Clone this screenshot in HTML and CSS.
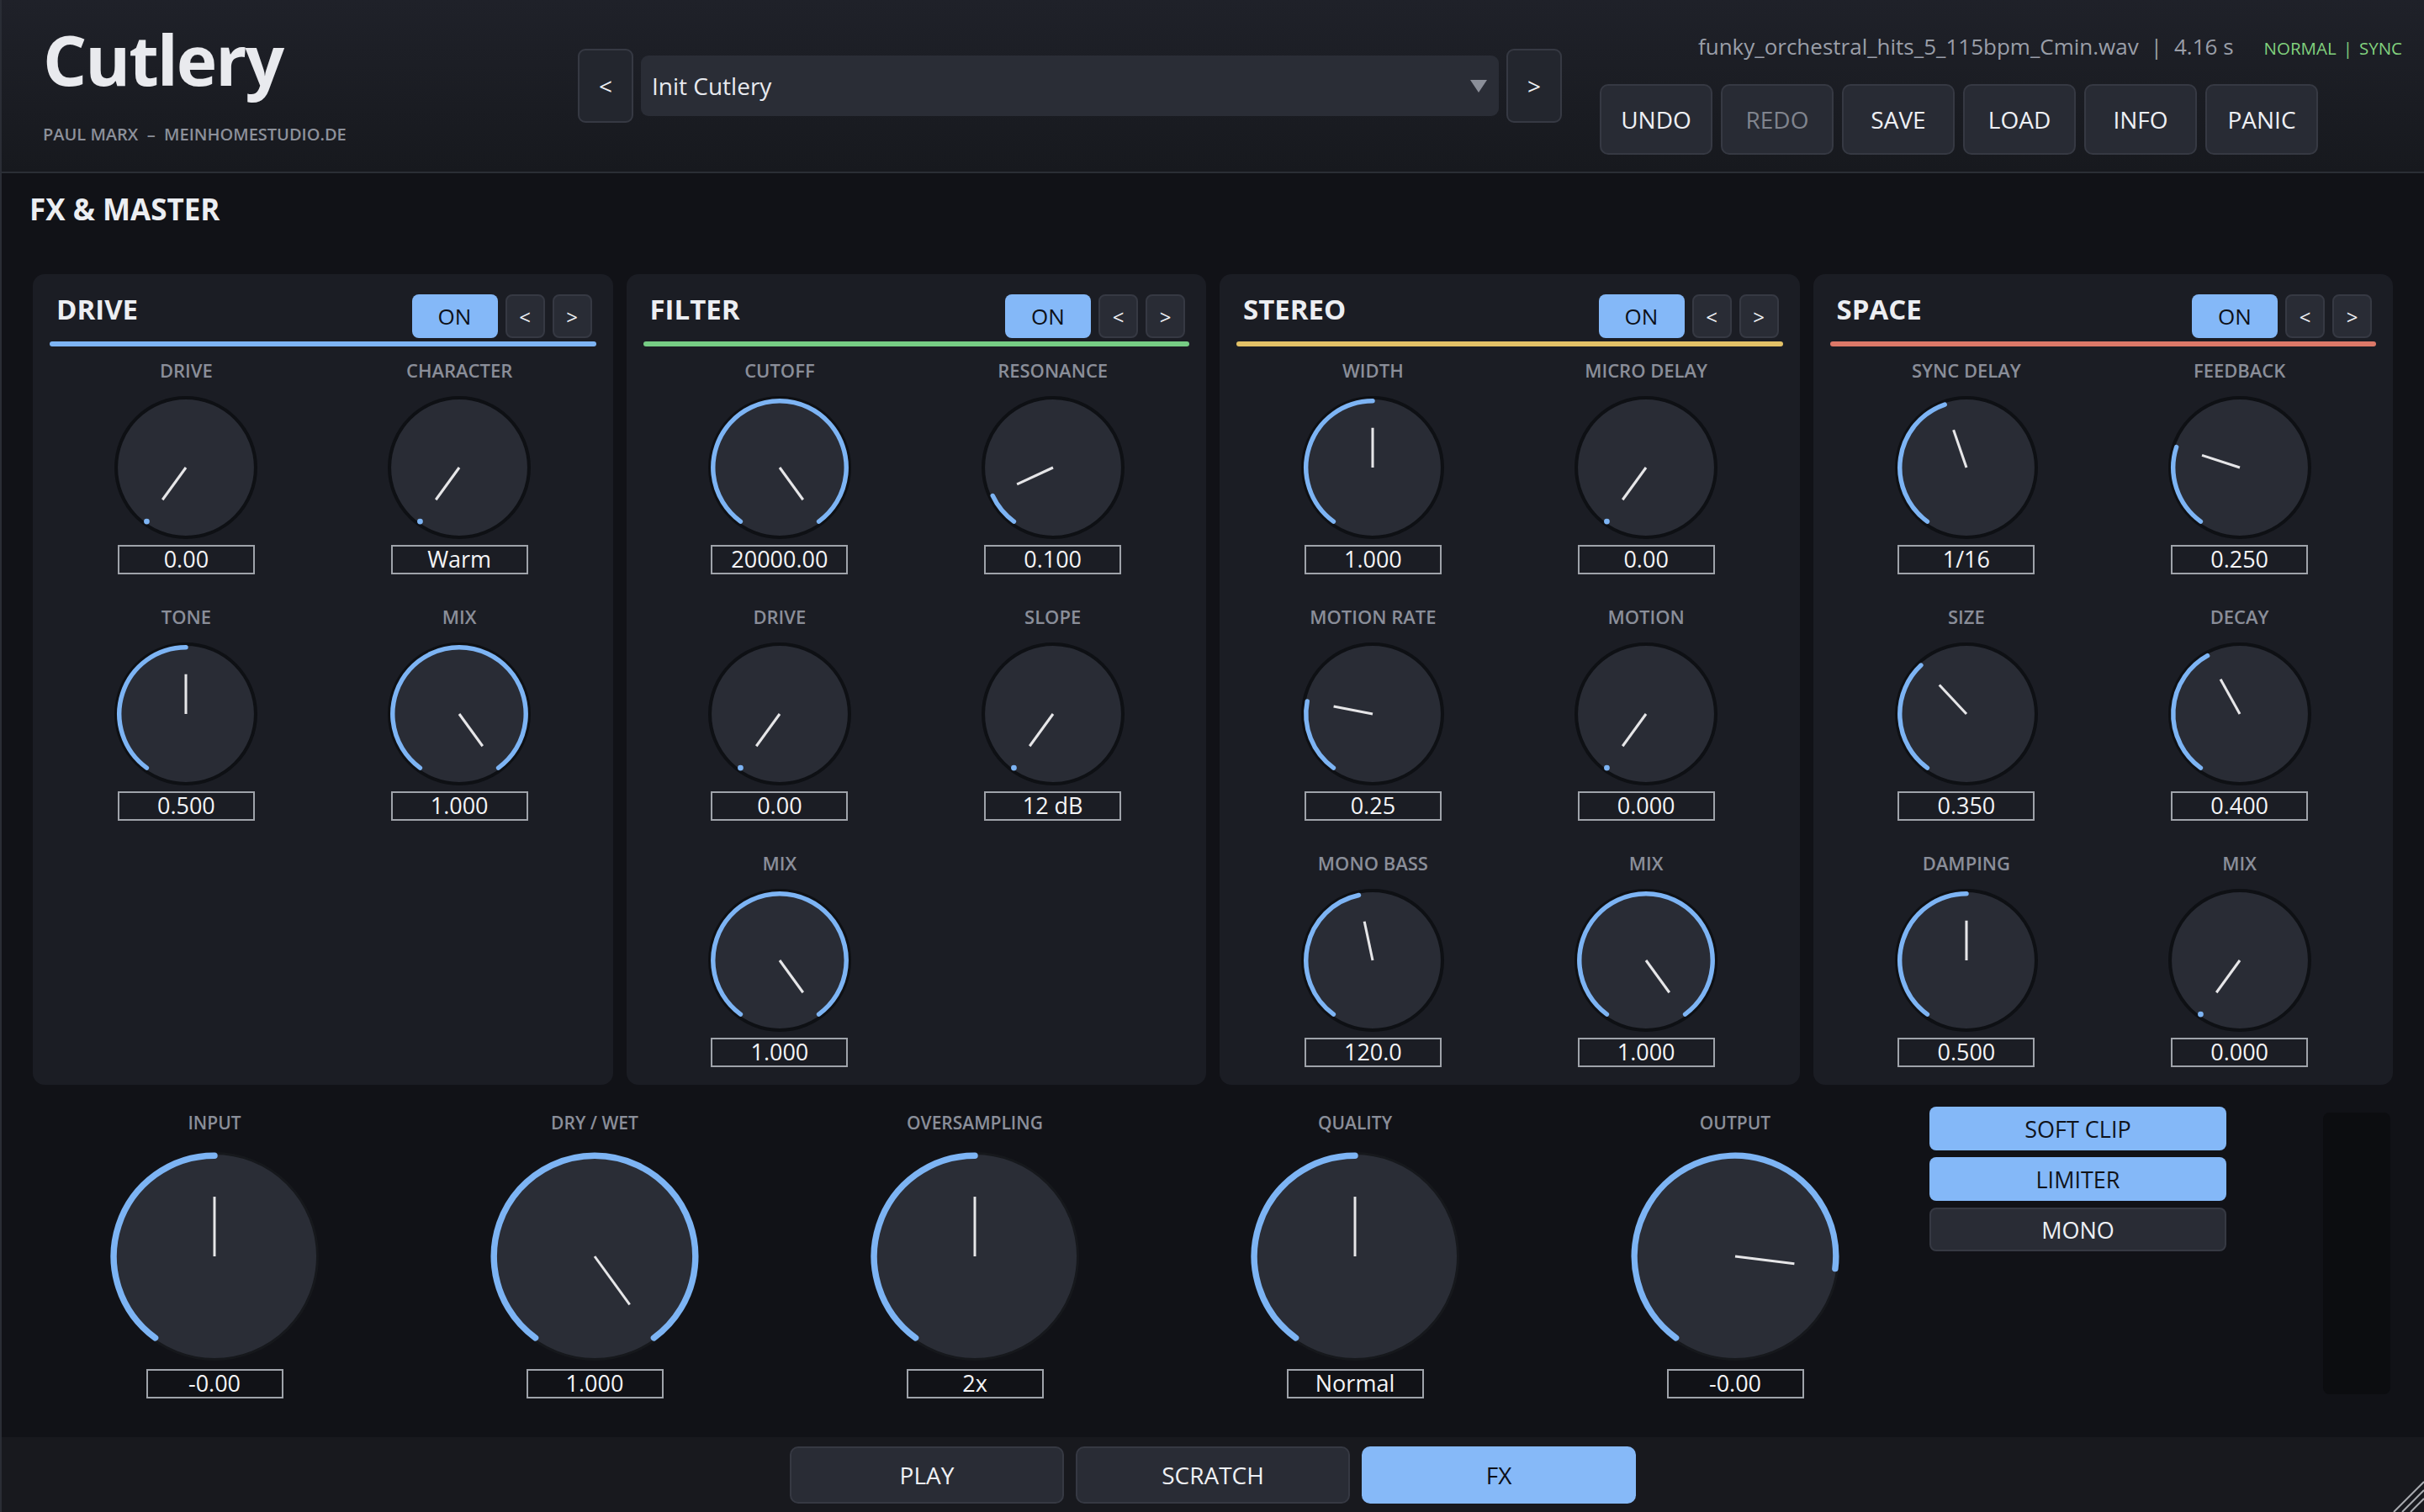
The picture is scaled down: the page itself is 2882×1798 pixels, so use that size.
FILE: index.html
```html
<!DOCTYPE html>
<html>
    <head>
        <title>Cutlery</title>
        <meta charset="UTF-8">
        <link rel="stylesheet" href="styles.css">
    </head>
    <body>
        <div class="app">

            <div class="topbar">
                <div class="brand">
                    <h1>Cutlery</h1>
                    <div class="by">PAUL MARX  –  MEINHOMESTUDIO.DE</div>
                </div>

                <div class="preset">
                    <div class="btn preset-arrow">&lt;</div>
                    <div class="preset-select">Init Cutlery<span class="caret"></span></div>
                    <div class="btn preset-arrow">&gt;</div>
                </div>

                <div class="status">
                    <div class="info">funky_orchestral_hits_5_115bpm_Cmin.wav<span class="sep">|</span>4.16 s<span class="mode">NORMAL<span class="sep2">|</span>SYNC</span></div>
                    <div class="tools">
                        <div class="btn tool">UNDO</div>
                        <div class="btn tool off">REDO</div>
                        <div class="btn tool">SAVE</div>
                        <div class="btn tool">LOAD</div>
                        <div class="btn tool">INFO</div>
                        <div class="btn tool">PANIC</div>
                    </div>
                </div>
            </div>

            <div class="main">
                <h2 class="section-title">FX &amp; MASTER</h2>

                <div class="panels">
                    <!-- drive -->
                    <div class="panel">
                        <div class="panel-head">
                            <h3>DRIVE</h3>
                            <div class="head-btns">
                                <div class="btn on">ON</div>
                                <div class="btn nav">&lt;</div>
                                <div class="btn nav">&gt;</div>
                            </div>
                        </div>
                        <div class="bar blue"></div>
                        <div class="knobs">
                            <div class="param"><div class="label">DRIVE</div><div class="knob" data-a="-144"></div><div class="value">0.00</div></div>
                            <div class="param"><div class="label">CHARACTER</div><div class="knob" data-a="-144"></div><div class="value">Warm</div></div>
                            <div class="param"><div class="label">TONE</div><div class="knob" data-a="0"></div><div class="value">0.500</div></div>
                            <div class="param"><div class="label">MIX</div><div class="knob" data-a="144"></div><div class="value">1.000</div></div>
                        </div>
                    </div>

                    <!-- filter -->
                    <div class="panel">
                        <div class="panel-head">
                            <h3>FILTER</h3>
                            <div class="head-btns">
                                <div class="btn on">ON</div>
                                <div class="btn nav">&lt;</div>
                                <div class="btn nav">&gt;</div>
                            </div>
                        </div>
                        <div class="bar green"></div>
                        <div class="knobs">
                            <div class="param"><div class="label">CUTOFF</div><div class="knob" data-a="144"></div><div class="value">20000.00</div></div>
                            <div class="param"><div class="label">RESONANCE</div><div class="knob" data-a="-115"></div><div class="value">0.100</div></div>
                            <div class="param"><div class="label">DRIVE</div><div class="knob" data-a="-144"></div><div class="value">0.00</div></div>
                            <div class="param"><div class="label">SLOPE</div><div class="knob" data-a="-144"></div><div class="value">12 dB</div></div>
                            <div class="param"><div class="label">MIX</div><div class="knob" data-a="144"></div><div class="value">1.000</div></div>
                        </div>
                    </div>

                    <!-- stereo -->
                    <div class="panel">
                        <div class="panel-head">
                            <h3>STEREO</h3>
                            <div class="head-btns">
                                <div class="btn on">ON</div>
                                <div class="btn nav">&lt;</div>
                                <div class="btn nav">&gt;</div>
                            </div>
                        </div>
                        <div class="bar yellow"></div>
                        <div class="knobs">
                            <div class="param"><div class="label">WIDTH</div><div class="knob" data-a="0"></div><div class="value">1.000</div></div>
                            <div class="param"><div class="label">MICRO DELAY</div><div class="knob" data-a="-144"></div><div class="value">0.00</div></div>
                            <div class="param"><div class="label">MOTION RATE</div><div class="knob" data-a="-79"></div><div class="value">0.25</div></div>
                            <div class="param"><div class="label">MOTION</div><div class="knob" data-a="-144"></div><div class="value">0.000</div></div>
                            <div class="param"><div class="label">MONO BASS</div><div class="knob" data-a="-12"></div><div class="value">120.0</div></div>
                            <div class="param"><div class="label">MIX</div><div class="knob" data-a="144"></div><div class="value">1.000</div></div>
                        </div>
                    </div>

                    <!-- space -->
                    <div class="panel">
                        <div class="panel-head">
                            <h3>SPACE</h3>
                            <div class="head-btns">
                                <div class="btn on">ON</div>
                                <div class="btn nav">&lt;</div>
                                <div class="btn nav">&gt;</div>
                            </div>
                        </div>
                        <div class="bar red"></div>
                        <div class="knobs">
                            <div class="param"><div class="label">SYNC DELAY</div><div class="knob" data-a="-19"></div><div class="value">1/16</div></div>
                            <div class="param"><div class="label">FEEDBACK</div><div class="knob" data-a="-72"></div><div class="value">0.250</div></div>
                            <div class="param"><div class="label">SIZE</div><div class="knob" data-a="-43"></div><div class="value">0.350</div></div>
                            <div class="param"><div class="label">DECAY</div><div class="knob" data-a="-29"></div><div class="value">0.400</div></div>
                            <div class="param"><div class="label">DAMPING</div><div class="knob" data-a="0"></div><div class="value">0.500</div></div>
                            <div class="param"><div class="label">MIX</div><div class="knob" data-a="-144"></div><div class="value">0.000</div></div>
                        </div>
                    </div>
                </div>

                <div class="master">
                    <div class="param"><div class="label">INPUT</div><div class="knob big" data-a="0"></div><div class="value">-0.00</div></div>
                    <div class="param"><div class="label">DRY / WET</div><div class="knob big" data-a="144"></div><div class="value">1.000</div></div>
                    <div class="param"><div class="label">OVERSAMPLING</div><div class="knob big" data-a="0"></div><div class="value">2x</div></div>
                    <div class="param"><div class="label">QUALITY</div><div class="knob big" data-a="0"></div><div class="value">Normal</div></div>
                    <div class="param"><div class="label">OUTPUT</div><div class="knob big" data-a="97"></div><div class="value">-0.00</div></div>
                    <div class="toggles">
                        <div class="btn toggle active">SOFT CLIP</div>
                        <div class="btn toggle active">LIMITER</div>
                        <div class="btn toggle">MONO</div>
                    </div>
                    <div class="meter"></div>
                </div>
            </div>

            <div class="footer">
                <div class="btn tab">PLAY</div>
                <div class="btn tab">SCRATCH</div>
                <div class="btn tab active">FX</div>
            </div>

            <svg class="grip" viewBox="0 0 38 38">
                <line x1="38" y1="2" x2="2" y2="38"/>
                <line x1="38" y1="12" x2="12" y2="38"/>
                <line x1="38" y1="22" x2="22" y2="38"/>
            </svg>
        </div>

        <script>
            var START = -144;

            function pt(r, deg) {
                var rad = deg * Math.PI / 180;
                return [(50 + r * Math.sin(rad)).toFixed(2), (50 - r * Math.cos(rad)).toFixed(2)];
            }

            function drawKnob(el) {
                var a = parseFloat(el.getAttribute('data-a'));
                var big = el.classList.contains('big');
                var arcR = big ? 48.3 : 46.6;
                var s = pt(arcR, START);
                var e = pt(arcR, a);
                var p = pt(big ? 28.6 : 27.8, a);

                var svg = '<svg viewBox="0 0 100 100">';
                svg += '<circle class="body" cx="50" cy="50" r="' + (big ? 49.4 : 48.8) + '"/>';
                if (a <= START) {
                    svg += '<circle class="dot" cx="' + s[0] + '" cy="' + s[1] + '" r="2"/>';
                } else {
                    var large = (a - START) > 180 ? 1 : 0;
                    svg += '<path class="arc" d="M ' + s[0] + ' ' + s[1] + ' A ' + arcR + ' ' + arcR +
                        ' 0 ' + large + ' 1 ' + e[0] + ' ' + e[1] + '"/>';
                }
                svg += '<line class="ptr" x1="50" y1="50" x2="' + p[0] + '" y2="' + p[1] + '"/>';
                el.innerHTML = svg + '</svg>';
            }

            var knobs = document.querySelectorAll('.knob');
            for (var i = 0; i < knobs.length; i++) {
                drawKnob(knobs[i]);
            }
        </script>
    </body>
</html>
```

FILE: styles.css
```css
* {
    box-sizing: border-box;
}

html, body {
    margin: 0;
    padding: 0;
}

body {
    width: 2882px;
    height: 1798px;
    overflow: hidden;
    background-color: #111217;
    font-family: "Open Sans", "Noto Sans", sans-serif;
    color: #e8eaee;
}

.app {
    position: relative;
    height: 1798px;
    display: flex;
    flex-direction: column;
    border-left: 2px solid #2a2d35;
}

.btn {
    display: flex;
    align-items: center;
    justify-content: center;
    background-color: #282b34;
    border: 2px solid #363943;
    border-radius: 10px;
    color: #eef0f4;
}

/* top bar */
.topbar {
    flex: none;
    height: 206px;
    display: flex;
    align-items: flex-start;
    padding: 0 26px 0 49px;
    background: linear-gradient(180deg, #1f2129 0%, #17191e 100%);
    border-bottom: 2px solid #2b2e35;
}

.brand {
    flex: none;
    width: 636px;
    padding-top: 29px;
}

.brand h1 {
    margin: 0;
    font-size: 82px;
    line-height: 82px;
    font-weight: 700;
    letter-spacing: -2px;
    color: #e9eaee;
}

.brand .by {
    margin-top: 37px;
    font-size: 20px;
    line-height: 24px;
    font-weight: 600;
    color: #8c909a;
    white-space: pre;
}

.preset {
    display: flex;
    align-items: center;
    gap: 9px;
    margin-top: 58px;
}

.preset-arrow {
    width: 66px;
    height: 88px;
    border-radius: 9px;
    background-color: #23262e;
    font-size: 28px;
}

.preset-select {
    position: relative;
    width: 1020px;
    height: 72px;
    display: flex;
    align-items: center;
    padding-left: 13px;
    background-color: #2a2d36;
    border-radius: 9px;
    font-size: 28px;
    color: #e8eaef;
}

.preset-select .caret {
    position: absolute;
    right: 14px;
    top: 29px;
    width: 0;
    height: 0;
    border-left: 10px solid transparent;
    border-right: 10px solid transparent;
    border-top: 15px solid #8b8f99;
}

.status {
    margin-left: auto;
    width: 954px;
    padding-top: 37px;
}

.info {
    text-align: right;
    font-size: 26px;
    line-height: 36px;
    color: #9a9ea8;
    white-space: nowrap;
}

.info .sep {
    margin: 0 14px;
}

.info .mode {
    margin-left: 36px;
    font-size: 20.5px;
    color: #82d27e;
}

.info .sep2 {
    margin: 0 8px;
}

.tools {
    display: flex;
    gap: 10px;
    margin-top: 25px;
}

.tool {
    width: 134px;
    height: 84px;
    font-size: 28px;
    font-weight: 500;
}

.tool.off {
    color: #80848e;
}

/* main area */
.main {
    flex: 1;
    padding: 0 37px;
}

.section-title {
    margin: 22px 0 0 -4px;
    font-size: 35px;
    line-height: 42px;
    font-weight: 700;
    color: #eceef2;
}

.panels {
    margin-top: 56px;
    display: grid;
    grid-template-columns: repeat(4, 1fr);
    gap: 16px;
}

.panel {
    background-color: #1b1d24;
    border-radius: 14px;
    padding: 24px 20px 21px;
}

.panel-head {
    display: flex;
    justify-content: space-between;
    align-items: flex-start;
    height: 52px;
    padding: 0 5px 0 8px;
}

.panel-head h3 {
    margin: -2px 0 0;
    font-size: 33px;
    line-height: 40px;
    font-weight: 700;
    color: #eceef2;
}

.head-btns {
    display: flex;
    gap: 9px;
}

.btn.on {
    width: 102px;
    height: 52px;
    border: none;
    border-radius: 8px;
    background-color: #84b8f8;
    color: #0d1018;
    font-size: 26px;
}

.btn.nav {
    width: 47px;
    height: 52px;
    border-radius: 8px;
    background-color: #292c35;
    font-size: 24px;
}

.bar {
    height: 6px;
    margin-top: 4px;
    border-radius: 3px;
}

.bar.blue { background-color: #7db4f4; }
.bar.green { background-color: #76cc84; }
.bar.yellow { background-color: #e3c167; }
.bar.red { background-color: #dc7868; }

.knobs {
    display: grid;
    grid-template-columns: 1fr 1fr;
    row-gap: 38px;
    margin-top: 16px;
}

.param {
    display: flex;
    flex-direction: column;
    align-items: center;
}

.param .label {
    font-size: 22px;
    line-height: 24px;
    font-weight: 600;
    color: #8a8e99;
    white-space: nowrap;
}

.knob {
    width: 170px;
    height: 170px;
    margin-top: 19px;
}

.knob svg {
    display: block;
    width: 100%;
    height: 100%;
}

.knob .body {
    fill: #292c35;
    stroke: #0e1014;
    stroke-width: 2.4;
}

.knob .arc {
    fill: none;
    stroke: #7db4f4;
    stroke-width: 3.2;
    stroke-linecap: round;
}

.knob .dot {
    fill: #7db4f4;
}

.knob .ptr {
    stroke: #e6e6e8;
    stroke-width: 1.8;
}

.value {
    margin-top: 7px;
    width: 163px;
    height: 35px;
    border: 2px solid #9fa3aa;
    font-size: 27px;
    line-height: 30px;
    font-weight: 500;
    text-align: center;
    color: #f4f4f6;
}

/* master row */
.master {
    display: grid;
    grid-template-columns: repeat(5, 432px) 348px 1fr;
    column-gap: 20px;
    margin-top: 26px;
}

.master .param {
    padding-top: 6px;
}

.master .param .label {
    font-size: 21px;
    line-height: 26px;
}

.knob.big {
    width: 248px;
    height: 248px;
    margin-top: 22px;
}

.knob.big .body {
    fill: #2a2d36;
    stroke: #16181c;
    stroke-width: 1.2;
}

.knob.big .arc {
    stroke-width: 3;
}

.knob.big .ptr {
    stroke-width: 1.2;
}

.master .value {
    margin-top: 10px;
}

.toggles {
    display: flex;
    flex-direction: column;
    gap: 8px;
    margin-left: -5px;
}

.toggle {
    height: 52px;
    border-radius: 8px;
    background-color: #292c35;
    font-size: 27px;
}

.toggle.active {
    border: none;
    background-color: #84b8f8;
    color: #10131a;
}

.meter {
    justify-self: end;
    width: 80px;
    height: 335px;
    margin: 7px 3px 0 0;
    background-color: #0c0d10;
    border-radius: 8px;
}

/* footer tabs */
.footer {
    flex: none;
    height: 89px;
    display: flex;
    justify-content: center;
    gap: 14px;
    padding-top: 11px;
    background-color: #18191e;
}

.tab {
    width: 326px;
    height: 68px;
    font-size: 28px;
    font-weight: 500;
    background-color: #292c35;
}

.tab.active {
    border: none;
    background-color: #86b9f8;
    color: #0d1018;
}

.grip {
    position: absolute;
    right: 0;
    bottom: 0;
    width: 38px;
    height: 38px;
}

.grip line {
    stroke: #a9abb0;
    stroke-width: 2;
}
```
